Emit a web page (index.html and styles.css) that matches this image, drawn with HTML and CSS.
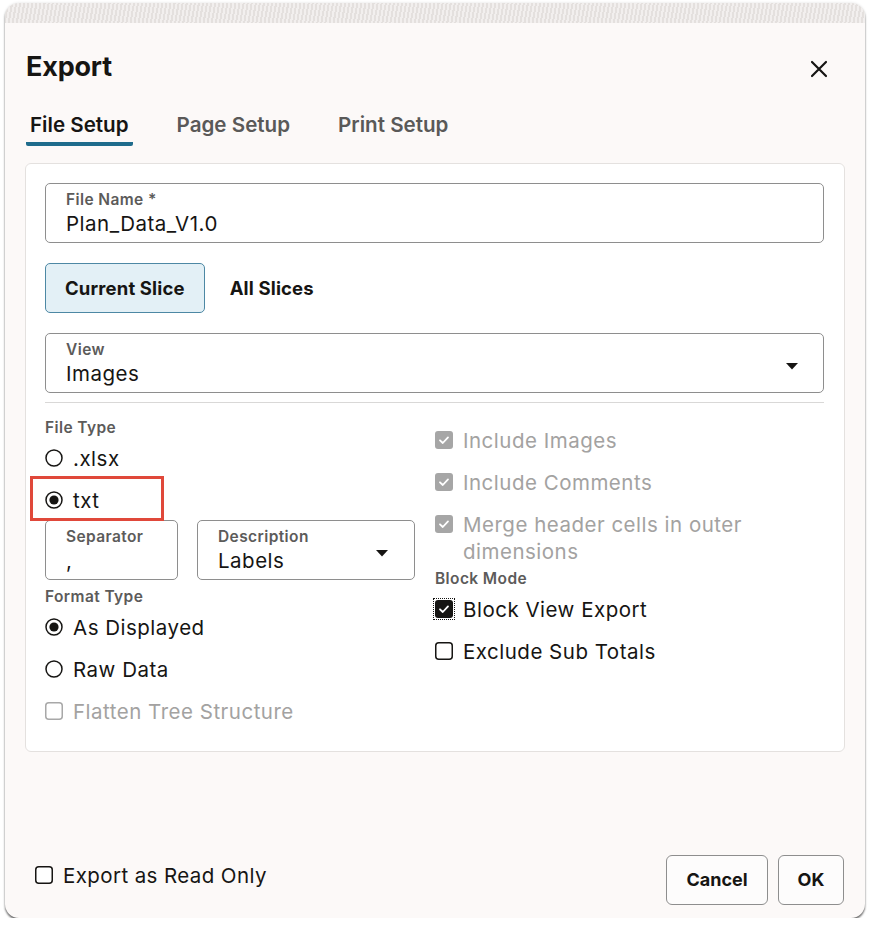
FILE: index.html
```html
<!DOCTYPE html>
<html>
<head>
<meta charset="utf-8">
<link rel="stylesheet" href="styles.css">
</head>
<body>
<div class="dialog">
  <div class="strip"></div>
  <div class="title-row">
    <h1 class="title">Export</h1>
    <button class="close" aria-label="Close">
      <svg width="18" height="18" viewBox="0 0 18 18"><path d="M2 2 L16 16 M16 2 L2 16" stroke="#161513" stroke-width="2.2" stroke-linecap="round"/></svg>
    </button>
  </div>
  <div class="tabs">
    <div class="tab active">File Setup</div>
    <div class="tab">Page Setup</div>
    <div class="tab">Print Setup</div>
  </div>
  <div class="card">
    <div class="field">
      <div class="field-label">File Name *</div>
      <div class="field-value">Plan_Data_V1.0</div>
    </div>
    <div class="seg">
      <div class="seg-btn selected">Current Slice</div>
      <div class="seg-btn">All Slices</div>
    </div>
    <div class="field select">
      <div class="field-text">
        <div class="field-label">View</div>
        <div class="field-value">Images</div>
      </div>
      <svg class="caret" width="12" height="7" viewBox="0 0 12 7"><path d="M0 0 H12 L6 6.5 Z" fill="#161513"/></svg>
    </div>
    <div class="divider"></div>
    <div class="cols">
      <div class="col left">
        <div class="group-label">File Type</div>
        <div class="row">
          <svg class="ico" width="18" height="18" viewBox="0 0 18 18"><circle cx="9" cy="9" r="8" fill="#fff" stroke="#161513" stroke-width="1.5"/></svg>
          <span>.xlsx</span>
        </div>
        <div class="row txt-row">
          <svg class="ico" width="18" height="18" viewBox="0 0 18 18"><circle cx="9" cy="9" r="8" fill="#fff" stroke="#161513" stroke-width="1.5"/><circle cx="9" cy="9" r="4.6" fill="#161513"/></svg>
          <span>txt</span>
          <div class="highlight"></div>
        </div>
        <div class="pair">
          <div class="field small">
            <div class="field-label">Separator</div>
            <div class="field-value">,</div>
          </div>
          <div class="field select medium">
            <div class="field-text">
              <div class="field-label">Description</div>
              <div class="field-value">Labels</div>
            </div>
            <svg class="caret" width="12" height="7" viewBox="0 0 12 7"><path d="M0 0 H12 L6 6.5 Z" fill="#161513"/></svg>
          </div>
        </div>
        <div class="group-label format">Format Type</div>
        <div class="row">
          <svg class="ico" width="18" height="18" viewBox="0 0 18 18"><circle cx="9" cy="9" r="8" fill="#fff" stroke="#161513" stroke-width="1.5"/><circle cx="9" cy="9" r="4.6" fill="#161513"/></svg>
          <span>As Displayed</span>
        </div>
        <div class="row">
          <svg class="ico" width="18" height="18" viewBox="0 0 18 18"><circle cx="9" cy="9" r="8" fill="#fff" stroke="#161513" stroke-width="1.5"/></svg>
          <span>Raw Data</span>
        </div>
        <div class="row disabled">
          <svg class="ico" width="18" height="18" viewBox="0 0 18 18"><rect x="0.75" y="0.75" width="16.5" height="16.5" rx="3" fill="#fff" stroke="#a8a8a8" stroke-width="1.5"/></svg>
          <span>Flatten Tree Structure</span>
        </div>
      </div>
      <div class="col right">
        <div class="row disabled">
          <svg class="ico" width="18" height="18" viewBox="0 0 18 18"><rect x="0" y="0" width="18" height="18" rx="3" fill="#a6a6a6"/><path d="M5 9.3 L7.8 12 L13 6.4" fill="none" stroke="#fff" stroke-width="1.8" stroke-linecap="round" stroke-linejoin="round"/></svg>
          <span>Include Images</span>
        </div>
        <div class="row disabled">
          <svg class="ico" width="18" height="18" viewBox="0 0 18 18"><rect x="0" y="0" width="18" height="18" rx="3" fill="#a6a6a6"/><path d="M5 9.3 L7.8 12 L13 6.4" fill="none" stroke="#fff" stroke-width="1.8" stroke-linecap="round" stroke-linejoin="round"/></svg>
          <span>Include Comments</span>
        </div>
        <div class="row disabled multi">
          <svg class="ico" width="18" height="18" viewBox="0 0 18 18"><rect x="0" y="0" width="18" height="18" rx="3" fill="#a6a6a6"/><path d="M5 9.3 L7.8 12 L13 6.4" fill="none" stroke="#fff" stroke-width="1.8" stroke-linecap="round" stroke-linejoin="round"/></svg>
          <span>Merge header cells in outer dimensions</span>
        </div>
        <div class="group-label block">Block Mode</div>
        <div class="row">
          <span class="focus-ring"><svg class="ico" width="18" height="18" viewBox="0 0 18 18"><rect x="0" y="0" width="18" height="18" rx="3" fill="#161513"/><path d="M5 9.3 L7.8 12 L13 6.4" fill="none" stroke="#fff" stroke-width="1.8" stroke-linecap="round" stroke-linejoin="round"/></svg></span>
          <span>Block View Export</span>
        </div>
        <div class="row">
          <svg class="ico" width="18" height="18" viewBox="0 0 18 18"><rect x="0.75" y="0.75" width="16.5" height="16.5" rx="3" fill="#fff" stroke="#161513" stroke-width="1.5"/></svg>
          <span>Exclude Sub Totals</span>
        </div>
      </div>
    </div>
  </div>
  <div class="footer">
    <div class="row foot-check">
      <svg class="ico" width="18" height="18" viewBox="0 0 18 18"><rect x="0.75" y="0.75" width="16.5" height="16.5" rx="3" fill="#fff" stroke="#161513" stroke-width="1.5"/></svg>
      <span>Export as Read Only</span>
    </div>
    <div class="actions">
      <button class="btn cancel">Cancel</button>
      <button class="btn ok">OK</button>
    </div>
  </div>
</div>
</body>
</html>
```

FILE: styles.css
```css
* { box-sizing: border-box; }
html, body { margin: 0; padding: 0; background: #ffffff; }
body {
  font-family: Inter, "Noto Sans", "Liberation Sans", sans-serif;
  color: #161513;
  padding: 3px 5px 0 5px;
}
.dialog {
  width: 860px;
  height: 915px;
  background: #fcf9f8;
  border-radius: 14px;
  box-shadow: 0 2px 2px rgba(0,0,0,0.55), 0 0 3px rgba(0,0,0,0.12);
  display: flex;
  flex-direction: column;
  overflow: hidden;
}
.strip {
  height: 20px;
  flex: none;
  background-color: #ebe7e5;
  background-image: repeating-linear-gradient(100deg, rgba(255,255,255,0.35) 0 2px, rgba(0,0,0,0.03) 2px 4px);
}
.title-row {
  margin-top: 27px;
  height: 34px;
  padding: 0 37px 0 21px;
  display: flex;
  align-items: center;
  justify-content: space-between;
}
.title {
  margin: 0;
  font-size: 27px;
  line-height: 34px;
  font-weight: 700;
  letter-spacing: -0.2px;
}
.close {
  border: 0;
  background: transparent;
  padding: 0;
  width: 18px;
  height: 18px;
  display: flex;
  margin-top: 3px;
}
.tabs {
  margin-top: 24px;
  padding-left: 21px;
  display: flex;
  gap: 40px;
}
.tab {
  font-size: 20.6px;
  font-weight: 600;
  line-height: 34px;
  padding: 0 4px;
  color: #5a5958;
  border-bottom: 4px solid transparent;
}
.tab.active {
  color: #161513;
  border-bottom-color: #1f6c8c;
  border-radius: 0 0 2px 2px;
}
.card {
  margin: 17px 20px 0 20px;
  background: #ffffff;
  border: 1px solid #e4e1df;
  border-radius: 6px;
  padding: 19px 20px 20px 19px;
  height: 589px;
}
.field {
  height: 60px;
  border: 1px solid #8e8e8e;
  border-radius: 5px;
  padding: 7px 20px 0 20px;
}
.field-label {
  font-size: 15.5px;
  line-height: 18px;
  font-weight: 600;
  letter-spacing: 0.4px;
  color: #5c5b5a;
}
.field-value {
  font-size: 20.5px;
  line-height: 29px;
  letter-spacing: 0.5px;
  color: #161513;
}
.select {
  display: flex;
  align-items: center;
  justify-content: space-between;
  padding-right: 25px;
  margin-top: 20px;
}
.select .field-text { align-self: flex-start; }
.caret { flex: none; }
.seg {
  margin-top: 20px;
  display: flex;
  gap: 5px;
}
.seg-btn {
  height: 50px;
  padding: 0 19px;
  border: 1px solid transparent;
  border-radius: 5px;
  font-size: 18.5px;
  font-weight: 700;
  letter-spacing: 0.15px;
  display: flex;
  align-items: center;
}
.seg-btn.selected {
  background: #e3f0f6;
  border-color: #4d88a4;
}
.divider {
  margin-top: 9px;
  height: 1px;
  background: #d9d8d7;
}
.cols {
  margin-top: 16px;
  display: grid;
  grid-template-columns: 370px 389px;
  gap: 20px;
}
.col { display: flex; flex-direction: column; }
.group-label {
  font-size: 15.5px;
  line-height: 18px;
  font-weight: 600;
  letter-spacing: 0.4px;
  color: #5c5b5a;
}
.group-label.format { margin-top: 8px; }
.row {
  display: flex;
  align-items: center;
  gap: 10px;
  height: 42px;
  font-size: 20.5px;
  letter-spacing: 0.5px;
  position: relative;
}
.row .ico { flex: none; }
.row.disabled { color: #a3a2a1; }
.row.multi {
  height: auto;
  align-items: flex-start;
  padding: 8px 0 5px 0;
  line-height: 27px;
}
.row.multi .ico { margin-top: 4px; }
.row.multi span { max-width: 320px; }
.focus-ring {
  display: flex;
  outline: 1px dotted #161513;
  outline-offset: 1px;
}
.highlight {
  position: absolute;
  left: -15px;
  top: -3px;
  width: 134px;
  height: 45px;
  border: 3px solid #e0483a;
}
.pair {
  display: flex;
  gap: 19px;
  margin-top: -1px;
}
.field.small { width: 133px; margin-top: 0; }
.field.medium { width: 218px; margin-top: 0; padding-right: 26px; }
.footer {
  margin-top: auto;
  padding: 0 21px 13px 30px;
  display: flex;
  align-items: center;
  justify-content: space-between;
}
.foot-check { gap: 10px; margin-bottom: 9px; letter-spacing: 0.4px; }
.actions { display: flex; gap: 10px; }
.btn {
  height: 50px;
  border: 1px solid #8e8e8e;
  border-radius: 6px;
  background: #fdfcfc;
  font-family: inherit;
  font-size: 18px;
  font-weight: 700;
  color: #161513;
}
.btn.cancel { width: 102px; }
.btn.ok { width: 66px; }
```
